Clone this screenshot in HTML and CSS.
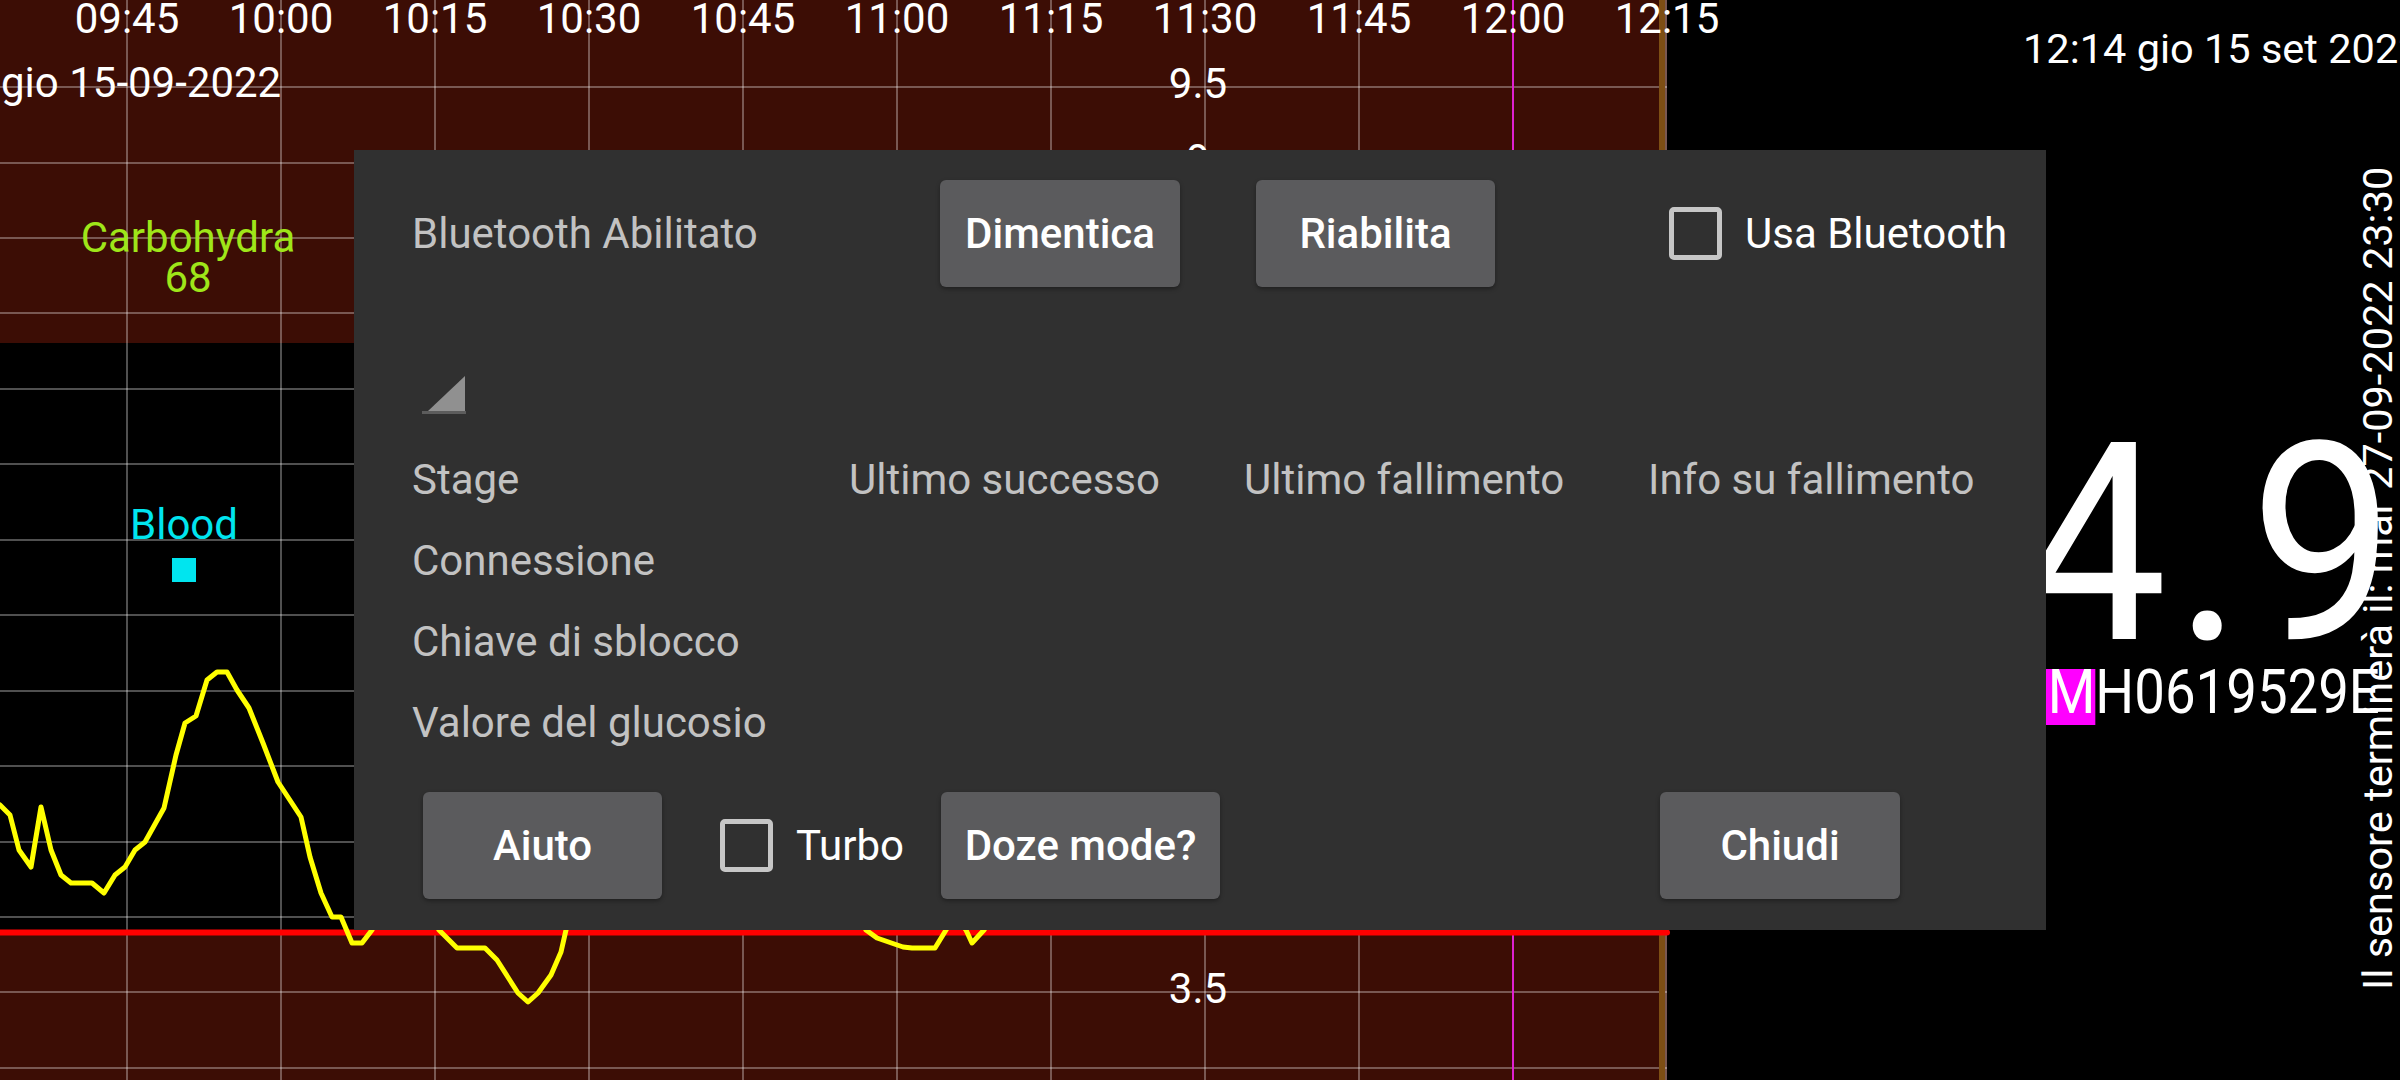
FILE: index.html
```html
<!DOCTYPE html>
<html lang="it">
<head>
<meta charset="utf-8">
<title>Bluetooth</title>
<link rel="stylesheet" href="styles.css">
</head>
<body>
<div class="screen">
  <div class="chart">
    <svg class="chart-svg" width="1667" height="1080" viewBox="0 0 1667 1080">
      <rect x="0" y="0" width="1667" height="343" fill="#3c0d05"/>
      <rect x="0" y="935" width="1667" height="145" fill="#3c0d05"/>
      <g class="grid">
        <line x1="0" y1="87" x2="1667" y2="87"/>
        <line x1="0" y1="163" x2="1667" y2="163"/>
        <line x1="0" y1="238" x2="1667" y2="238"/>
        <line x1="0" y1="313" x2="1667" y2="313"/>
        <line x1="0" y1="389" x2="1667" y2="389"/>
        <line x1="0" y1="464" x2="1667" y2="464"/>
        <line x1="0" y1="540" x2="1667" y2="540"/>
        <line x1="0" y1="615" x2="1667" y2="615"/>
        <line x1="0" y1="691" x2="1667" y2="691"/>
        <line x1="0" y1="766" x2="1667" y2="766"/>
        <line x1="0" y1="842" x2="1667" y2="842"/>
        <line x1="0" y1="917" x2="1667" y2="917"/>
        <line x1="0" y1="992" x2="1667" y2="992"/>
        <line x1="0" y1="1068" x2="1667" y2="1068"/>
        <line x1="127" y1="0" x2="127" y2="1080"/>
        <line x1="281" y1="0" x2="281" y2="1080"/>
        <line x1="435" y1="0" x2="435" y2="1080"/>
        <line x1="589" y1="0" x2="589" y2="1080"/>
        <line x1="743" y1="0" x2="743" y2="1080"/>
        <line x1="897" y1="0" x2="897" y2="1080"/>
        <line x1="1051" y1="0" x2="1051" y2="1080"/>
        <line x1="1205" y1="0" x2="1205" y2="1080"/>
        <line x1="1359" y1="0" x2="1359" y2="1080"/>
        <line x1="1666" y1="0" x2="1666" y2="1080"/>
      </g>
      <line x1="1513" y1="0" x2="1513" y2="1080" stroke="#e020d0" stroke-width="2"/>
      <rect x="1659" y="0" width="6" height="1080" fill="#7d4e14"/>
      <g class="axis">
        <text x="127" y="33">09:45</text>
        <text x="281" y="33">10:00</text>
        <text x="435" y="33">10:15</text>
        <text x="589" y="33">10:30</text>
        <text x="743" y="33">10:45</text>
        <text x="897" y="33">11:00</text>
        <text x="1051" y="33">11:15</text>
        <text x="1205" y="33">11:30</text>
        <text x="1359" y="33">11:45</text>
        <text x="1513" y="33">12:00</text>
        <text x="1667" y="33">12:15</text>
        <text x="1198" y="98">9.5</text>
        <text x="1198" y="174">9</text>
        <text x="1198" y="1003">3.5</text>
      </g>
      <text class="date" x="1" y="97">gio 15-09-2022</text>
      <g class="carbs">
        <text x="188" y="252">Carbohydra</text>
        <text x="188" y="292">68</text>
      </g>
      <text class="blood" x="184" y="539">Blood</text>
      <rect x="172" y="558" width="24" height="24" fill="#00e5ef"/>
      <line x1="0" y1="932.5" x2="1667" y2="932.5" stroke="#ff0000" stroke-width="6" stroke-linecap="round"/>
      <polyline class="curve" points="0,805 10,815 19,850 31,867 41,807 51,850 61,875 71,883 92,883 104,893 115,875 125,867 135,850 145,842 164,808 176,755 185,723 196,716 207,680 217,672 227,672 237,690 249,708 263,743 278,782 301,817 310,857 321,893 332,917 341,917 352,943 362,943 372,930 385,900 410,880 439,930 457,948 485,948 497,960 518,993 528,1002 538,993 551,975 561,952 566,930 580,880 700,850 850,900 866,930 877,938 903,947 912,948 935,948 946,930 955,915 966,930 972,943 984,930 1000,900 1200,820 1400,800 1600,820 1650,830"/>
    </svg>
  </div>

  <div class="side">
    <div class="clock">12:14 gio 15 set 2022</div>
    <div class="big">4.9</div>
    <div class="serial"><span class="hl">3M</span>H0619529E</div>
    <div class="expiry">Il sensore terminerà il: mar 27-09-2022 23:30</div>
  </div>

  <div class="dialog">
    <div class="row-top">
      <div class="lbl lbl-bt">Bluetooth Abilitato</div>
      <div class="btn btn-dim">Dimentica</div>
      <div class="btn btn-ria">Riabilita</div>
      <div class="check check-bt"></div>
      <div class="chk-text">Usa Bluetooth</div>
    </div>
    <div class="signal">
      <svg width="44" height="38" viewBox="0 0 44 38">
        <rect x="0" y="35" width="44" height="3" fill="#5c5c5c"/>
        <polygon points="6,35 43,0 43,35" fill="#909090"/>
      </svg>
    </div>
    <div class="table">
      <div class="lbl">Stage</div>
      <div class="lbl">Ultimo successo</div>
      <div class="lbl">Ultimo fallimento</div>
      <div class="lbl">Info su fallimento</div>
      <div class="lbl">Connessione</div>
      <div></div><div></div><div></div>
      <div class="lbl">Chiave di sblocco</div>
      <div></div><div></div><div></div>
      <div class="lbl">Valore del glucosio</div>
      <div></div><div></div><div></div>
    </div>
    <div class="row-bottom">
      <div class="btn btn-aiuto">Aiuto</div>
      <div class="check check-turbo"></div>
      <div class="chk-text turbo">Turbo</div>
      <div class="btn btn-doze">Doze mode?</div>
      <div class="btn btn-chiudi">Chiudi</div>
    </div>
  </div>
</div>
</body>
</html>
```

FILE: styles.css
```css
html, body {
  margin: 0;
  padding: 0;
  background: #000;
}
body {
  width: 2400px;
  height: 1080px;
  overflow: hidden;
  font-family: Roboto, "Noto Sans", "Liberation Sans", sans-serif;
  color: #fff;
}
.screen {
  position: relative;
  width: 2400px;
  height: 1080px;
  display: flex;
  overflow: hidden;
}
.chart {
  position: relative;
  z-index: 1;
  width: 1667px;
  height: 1080px;
  flex: none;
}
.chart-svg {
  display: block;
  overflow: visible;
}
.grid line {
  stroke: rgba(255, 255, 255, 0.42);
  stroke-width: 1.5;
}
.chart-svg text {
  font-family: Roboto, "Liberation Sans", sans-serif;
  font-size: 42px;
}
.axis text {
  fill: #fff;
  text-anchor: middle;
}
.date {
  fill: #fff;
}
.carbs text {
  fill: #9fe619;
  text-anchor: middle;
}
.chart-svg .blood {
  fill: #00e5ef;
  text-anchor: middle;
}
.curve {
  fill: none;
  stroke: #ffff00;
  stroke-width: 5;
  stroke-linejoin: round;
  stroke-linecap: round;
}

/* right panel */
.side {
  position: relative;
  flex: 1;
  height: 1080px;
  display: flex;
  flex-direction: column;
  white-space: nowrap;
}
.clock {
  font-size: 41.5px;
  line-height: 48px;
  padding-top: 25px;
  margin-left: 356px;
}
.big {
  margin-top: 348px;
  font-size: 277px;
  line-height: 248px;
  text-align: right;
  padding-right: 12px;
  letter-spacing: 8px;
  transform: scaleX(0.93);
  transform-origin: 534px 50%;
}
.serial {
  margin-left: 350px;
  font-size: 62px;
  line-height: 46px;
  transform: scaleX(0.88);
  transform-origin: 0 0;
}
.hl {
  display: inline-block;
  background: #ff00ff;
  line-height: 46px;
  padding-bottom: 10px;
}
.expiry {
  position: absolute;
  left: 690px;
  top: 990px;
  font-size: 41.5px;
  line-height: 41.5px;
  transform-origin: 0 0;
  transform: rotate(-90deg);
}

/* dialog */
.dialog {
  position: absolute;
  z-index: 2;
  left: 354px;
  top: 150px;
  width: 1692px;
  height: 780px;
  box-sizing: border-box;
  background: #303030;
  padding: 30px 0 0 58px;
  font-size: 42px;
}
.lbl {
  color: #c2c2c2;
  white-space: nowrap;
}
.row-top, .row-bottom {
  display: flex;
  align-items: center;
  height: 107px;
}
.lbl-bt {
  width: 528px;
  flex: none;
}
.btn {
  flex: none;
  height: 107px;
  box-sizing: border-box;
  background: #5b5b5d;
  border-radius: 6px;
  box-shadow: 0 2px 4px rgba(0, 0, 0, 0.35);
  display: flex;
  align-items: center;
  justify-content: center;
  color: #fff;
  font-weight: 500;
  font-size: 42px;
}
.btn-dim { width: 240px; }
.btn-ria { width: 239px; margin-left: 76px; }
.check {
  flex: none;
  width: 53px;
  height: 53px;
  box-sizing: border-box;
  border: 5px solid #c6c6c6;
  border-radius: 5px;
}
.check-bt { margin-left: 174px; }
.chk-text {
  color: #fff;
  margin-left: 23px;
  white-space: nowrap;
}
.signal {
  margin-top: 89px;
  margin-left: 10px;
  height: 38px;
}
.signal svg {
  display: block;
}
.table {
  margin-top: 25px;
  display: grid;
  grid-template-columns: 437px 395px 404px auto;
  line-height: 81px;
}
.row-bottom {
  margin-top: 29px;
}
.btn-aiuto { width: 239px; margin-left: 11px; }
.check-turbo { margin-left: 58px; }
.turbo {
  width: 145px;
  flex: none;
}
.btn-doze { width: 279px; }
.btn-chiudi { width: 240px; margin-left: 440px; }
```
